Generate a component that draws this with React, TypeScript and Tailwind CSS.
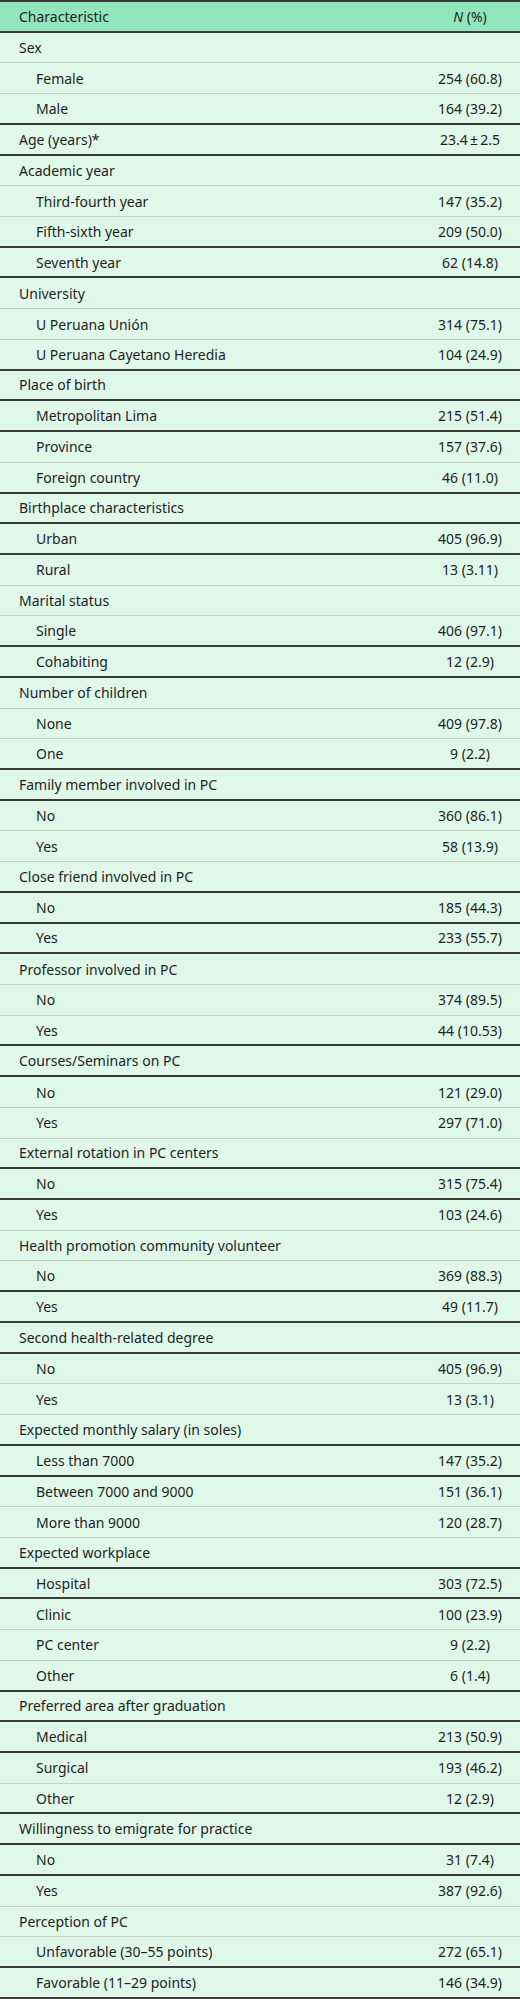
const rows: [string, string, number, boolean][] = [
  ['Sex', '', 0, false],
  ['Female', '254 (60.8)', 1, false],
  ['Male', '164 (39.2)', 1, true],
  ['Age (years)*', '23.4\u2009±\u20092.5', 0, true],
  ['Academic year', '', 0, false],
  ['Third-fourth year', '147 (35.2)', 1, false],
  ['Fifth-sixth year', '209 (50.0)', 1, true],
  ['Seventh year', '62 (14.8)', 1, true],
  ['University', '', 0, false],
  ['U Peruana Unión', '314 (75.1)', 1, false],
  ['U Peruana Cayetano Heredia', '104 (24.9)', 1, true],
  ['Place of birth', '', 0, true],
  ['Metropolitan Lima', '215 (51.4)', 1, true],
  ['Province', '157 (37.6)', 1, false],
  ['Foreign country', '46 (11.0)', 1, true],
  ['Birthplace characteristics', '', 0, true],
  ['Urban', '405 (96.9)', 1, true],
  ['Rural', '13 (3.11)', 1, false],
  ['Marital status', '', 0, false],
  ['Single', '406 (97.1)', 1, true],
  ['Cohabiting', '12 (2.9)', 1, true],
  ['Number of children', '', 0, false],
  ['None', '409 (97.8)', 1, false],
  ['One', '9 (2.2)', 1, true],
  ['Family member involved in PC', '', 0, true],
  ['No', '360 (86.1)', 1, false],
  ['Yes', '58 (13.9)', 1, false],
  ['Close friend involved in PC', '', 0, true],
  ['No', '185 (44.3)', 1, true],
  ['Yes', '233 (55.7)', 1, true],
  ['Professor involved in PC', '', 0, false],
  ['No', '374 (89.5)', 1, false],
  ['Yes', '44 (10.53)', 1, true],
  ['Courses/Seminars on PC', '', 0, true],
  ['No', '121 (29.0)', 1, false],
  ['Yes', '297 (71.0)', 1, false],
  ['External rotation in PC centers', '', 0, true],
  ['No', '315 (75.4)', 1, true],
  ['Yes', '103 (24.6)', 1, false],
  ['Health promotion community volunteer', '', 0, false],
  ['No', '369 (88.3)', 1, true],
  ['Yes', '49 (11.7)', 1, true],
  ['Second health-related degree', '', 0, true],
  ['No', '405 (96.9)', 1, false],
  ['Yes', '13 (3.1)', 1, false],
  ['Expected monthly salary (in soles)', '', 0, true],
  ['Less than 7000', '147 (35.2)', 1, true],
  ['Between 7000 and 9000', '151 (36.1)', 1, false],
  ['More than 9000', '120 (28.7)', 1, false],
  ['Expected workplace', '', 0, true],
  ['Hospital', '303 (72.5)', 1, true],
  ['Clinic', '100 (23.9)', 1, false],
  ['PC center', '9 (2.2)', 1, false],
  ['Other', '6 (1.4)', 1, true],
  ['Preferred area after graduation', '', 0, true],
  ['Medical', '213 (50.9)', 1, true],
  ['Surgical', '193 (46.2)', 1, false],
  ['Other', '12 (2.9)', 1, true],
  ['Willingness to emigrate for practice', '', 0, true],
  ['No', '31 (7.4)', 1, true],
  ['Yes', '387 (92.6)', 1, false],
  ['Perception of PC', '', 0, false],
  ['Unfavorable (30–55 points)', '272 (65.1)', 1, true],
  ['Favorable (11–29 points)', '146 (34.9)', 1, true],
];

export default function App() {
  return (
    <div
      className="w-[520px] bg-[#e0f8ea] text-[#1e1e1e] text-[14px] border-t-2 border-[#3c3c3c]"
      style={{ fontFamily: '"Noto Sans", sans-serif' }}
    >
      {/* header */}
      <div className="flex items-center h-[30.72px] bg-[#91e6bc] border-b-2 border-[#3c3c3c]">
        <div className="flex-1 pl-[19px]">Characteristic</div>
        <div className="w-[100px] text-center">
          <span className="italic">N</span> (%)
        </div>
      </div>

      {rows.map(([label, value, indent, dark], i) => (
        <div
          key={i}
          className={
            'flex items-center h-[30.72px] ' +
            (dark ? 'border-b-2 border-[#3c3c3c]' : 'border-b border-[#c4cdc6]')
          }
        >
          <div className={'flex-1 ' + (indent ? 'pl-[36px]' : 'pl-[19px]')}>{label}</div>
          <div className="w-[100px] text-center">{value}</div>
        </div>
      ))}
    </div>
  );
}
